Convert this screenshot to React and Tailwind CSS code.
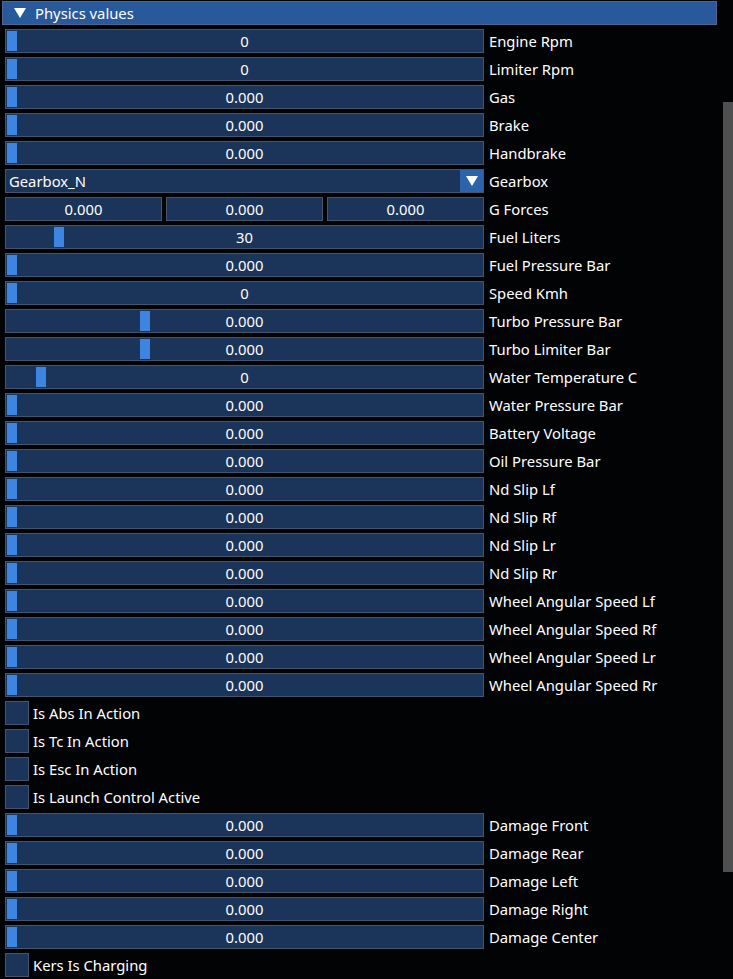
import React from "react";

const FONT = { fontFamily: '"Noto Sans", "Open Sans", sans-serif' };

const rows = [
  { t: "slider", v: "0", g: 2, l: "Engine Rpm" },
  { t: "slider", v: "0", g: 2, l: "Limiter Rpm" },
  { t: "slider", v: "0.000", g: 2, l: "Gas" },
  { t: "slider", v: "0.000", g: 2, l: "Brake" },
  { t: "slider", v: "0.000", g: 2, l: "Handbrake" },
  { t: "combo", v: "Gearbox_N", l: "Gearbox" },
  { t: "triple", l: "G Forces" },
  { t: "slider", v: "30", g: 49, l: "Fuel Liters" },
  { t: "slider", v: "0.000", g: 2, l: "Fuel Pressure Bar" },
  { t: "slider", v: "0", g: 2, l: "Speed Kmh" },
  { t: "slider", v: "0.000", g: 135, l: "Turbo Pressure Bar" },
  { t: "slider", v: "0.000", g: 135, l: "Turbo Limiter Bar" },
  { t: "slider", v: "0", g: 31, l: "Water Temperature C" },
  { t: "slider", v: "0.000", g: 2, l: "Water Pressure Bar" },
  { t: "slider", v: "0.000", g: 2, l: "Battery Voltage" },
  { t: "slider", v: "0.000", g: 2, l: "Oil Pressure Bar" },
  { t: "slider", v: "0.000", g: 2, l: "Nd Slip Lf" },
  { t: "slider", v: "0.000", g: 2, l: "Nd Slip Rf" },
  { t: "slider", v: "0.000", g: 2, l: "Nd Slip Lr" },
  { t: "slider", v: "0.000", g: 2, l: "Nd Slip Rr" },
  { t: "slider", v: "0.000", g: 2, l: "Wheel Angular Speed Lf" },
  { t: "slider", v: "0.000", g: 2, l: "Wheel Angular Speed Rf" },
  { t: "slider", v: "0.000", g: 2, l: "Wheel Angular Speed Lr" },
  { t: "slider", v: "0.000", g: 2, l: "Wheel Angular Speed Rr" },
  { t: "check", l: "Is Abs In Action" },
  { t: "check", l: "Is Tc In Action" },
  { t: "check", l: "Is Esc In Action" },
  { t: "check", l: "Is Launch Control Active" },
  { t: "slider", v: "0.000", g: 2, l: "Damage Front" },
  { t: "slider", v: "0.000", g: 2, l: "Damage Rear" },
  { t: "slider", v: "0.000", g: 2, l: "Damage Left" },
  { t: "slider", v: "0.000", g: 2, l: "Damage Right" },
  { t: "slider", v: "0.000", g: 2, l: "Damage Center" },
  { t: "check", l: "Kers Is Charging" },
];

const frame = "h-[24px] bg-[#1b3459] border border-[#45536d]";

function Label({ children }) {
  return <span className="ml-[5px] text-[14.8px] leading-[24px] text-white whitespace-nowrap">{children}</span>;
}

function Row({ r }) {
  if (r.t === "check") {
    return (
      <div className="flex items-center h-[24px] pl-[5px]">
        <div className={`w-[24px] ${frame}`} />
        <span className="ml-[4px] text-[14.8px] leading-[24px] text-white whitespace-nowrap">{r.l}</span>
      </div>
    );
  }
  let ctrl;
  if (r.t === "slider") {
    ctrl = (
      <div className={`relative w-[479px] flex items-center justify-center ${frame}`}>
        <div className="absolute top-[1px] w-[10px] h-[20px] bg-[#3d85e0]" style={{ left: r.g - 1 }} />
        <span className="relative text-[14.8px] leading-[22px] text-white">{r.v}</span>
      </div>
    );
  } else if (r.t === "combo") {
    ctrl = (
      <div className={`w-[479px] flex items-center ${frame}`}>
        <span className="flex-1 pl-[3px] text-[14.8px] leading-[22px] text-white">{r.v}</span>
        <div className="w-[23px] h-[22px] bg-[#2c63aa] flex items-center justify-center">
          <svg width="12" height="10" viewBox="0 0 12 10">
            <polygon points="0,0 12,0 6,10" fill="#ffffff" />
          </svg>
        </div>
      </div>
    );
  } else {
    ctrl = (
      <div className="w-[479px] flex gap-[4px]">
        {["0.000", "0.000", "0.000"].map((v, i) => (
          <div key={i} className={`flex-1 flex items-center justify-center ${frame}`}>
            <span className="text-[14.8px] leading-[22px] text-white">{v}</span>
          </div>
        ))}
      </div>
    );
  }
  return (
    <div className="flex items-center h-[24px] pl-[5px]">
      {ctrl}
      <Label>{r.l}</Label>
    </div>
  );
}

export default function App() {
  return (
    <div className="relative w-[733px] h-[979px] overflow-hidden bg-[#020305]" style={FONT}>
      <div className="pt-[1px] pl-[2px]">
        <div className="w-[715px] h-[24px] bg-[#28599a] border border-[#4f6590] flex items-center">
          <svg className="ml-[11px]" width="12" height="10" viewBox="0 0 12 10">
            <polygon points="0,0 12,0 6,10" fill="#ffffff" />
          </svg>
          <span className="ml-[9px] text-[14.8px] leading-[22px] text-white">Physics values</span>
        </div>
      </div>
      <div className="mt-[4px] flex flex-col gap-[4px]">
        {rows.map((r, i) => (
          <Row key={i} r={r} />
        ))}
      </div>
      <div className="absolute left-[723px] top-[102px] w-[10px] h-[770px] bg-[#4f4f4f]" />
    </div>
  );
}
